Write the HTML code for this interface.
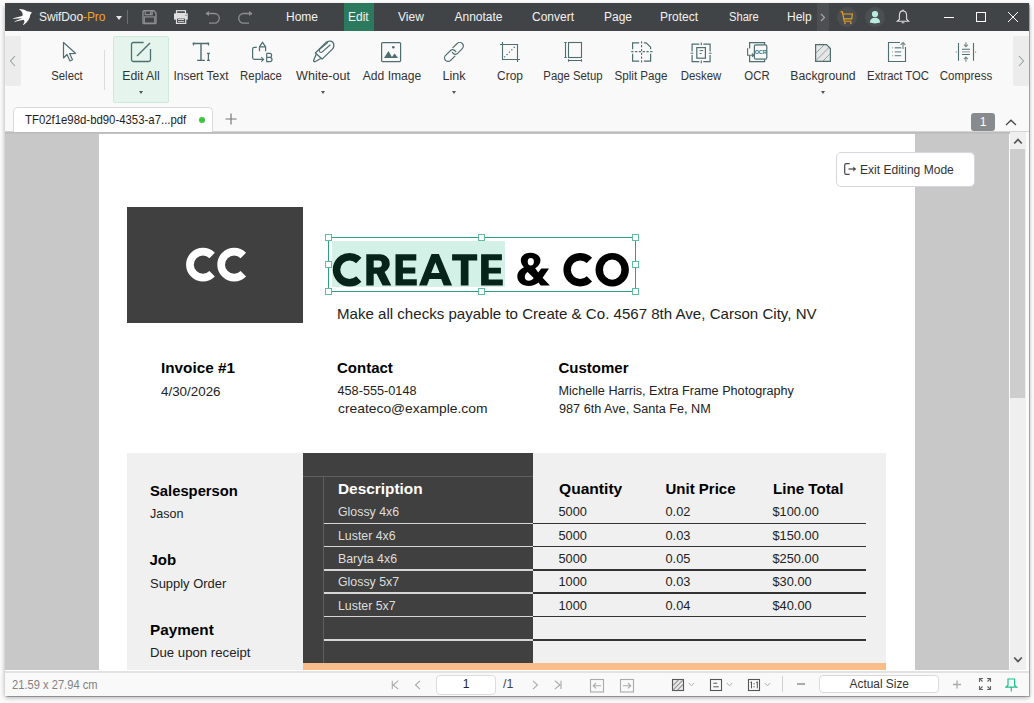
<!DOCTYPE html>
<html><head><meta charset="utf-8">
<style>
*{margin:0;padding:0;box-sizing:border-box}
html,body{width:1034px;height:703px;overflow:hidden;background:#fcfcfc;font-family:"Liberation Sans",sans-serif;position:relative}
.a{position:absolute}
.menu{position:absolute;top:3px;height:28px;line-height:28px;color:#f2f2f2;font-size:12px;white-space:nowrap}
.lbl{position:absolute;top:69px;height:14px;line-height:14px;font-size:12.5px;color:#333;white-space:nowrap;transform:translateX(-50%) scaleX(.92)}
.dd{position:absolute;top:91px;width:0;height:0;border-left:2.5px solid transparent;border-right:2.5px solid transparent;border-top:3px solid #555}
</style></head>
<body>
<div class="a" style="left:5px;top:3px;width:1024px;height:693px;background:#f9f9f9;box-shadow:0 0 1px 0.5px rgba(0,0,0,.25),0 1.5px 5px rgba(0,0,0,.35)"></div>
<!--TITLE-->
<div class="a" style="left:5px;top:3px;width:1024px;height:28px;background:#414446"></div>
<svg class="a" style="left:12px;top:8px" width="22" height="19" viewBox="0 0 22 19">
  <path d="M6.8 1.1C9.5 0.9 12.5 1.8 15 3.3L17.4 3.5L19.9 4.5L18.3 6.8C18 10.5 15.5 14.5 11.5 17L11 16.5C12.8 14.5 13 12.8 11.5 11.8L2.7 13.8L2.5 13.3L10.5 10.2L1.1 10.8L1 10.2L10.3 8C11.2 6.5 10.5 3.5 6.8 1.1Z" fill="#fff"/>
</svg>
<div class="menu" style="left:39px;font-size:12px;letter-spacing:-0.1px">SwifDoo<span style="color:#f0a22a">-Pro</span></div>
<div class="a" style="left:116px;top:16px;width:0;height:0;border-left:3.5px solid transparent;border-right:3.5px solid transparent;border-top:4px solid #e8e8e8"></div>
<div class="a" style="left:127px;top:10px;width:1px;height:14px;background:#6a6d6f"></div>
<svg class="a" style="left:142px;top:10px" width="15" height="15" viewBox="0 0 15 15"><path d="M1.8 0.8H11.8L14 3V12.8Q14 13.6 13.2 13.6H1.8Q1 13.6 1 12.8V1.6Q1 0.8 1.8 0.8Z" fill="none" stroke="#8c8e90" stroke-width="1.4"/><path d="M3.2 0.8V4.6H10.2V0.8" fill="none" stroke="#8c8e90" stroke-width="1.2"/><rect x="8" y="1.4" width="1.5" height="2.6" fill="#8c8e90"/><rect x="2.3" y="6.9" width="10.4" height="6.2" fill="none" stroke="#8c8e90" stroke-width="1.2"/></svg>
<svg class="a" style="left:173px;top:10px" width="16" height="15" viewBox="0 0 16 15"><rect x="3.5" y="0.7" width="9" height="2.8" fill="none" stroke="#e0e0e0" stroke-width="1.2"/><path d="M1 3.4H14.8V9.6H1Z" fill="#e0e0e0"/><rect x="3.5" y="8" width="9.2" height="5.4" fill="#414446" stroke="#e0e0e0" stroke-width="1.2"/><path d="M5 9.5H11.2 M5 11.4H11.2" stroke="#d0d0d0" stroke-width="1"/><circle cx="13" cy="5.3" r="0.6" fill="#555"/></svg>
<svg class="a" style="left:205px;top:11px" width="16" height="14" viewBox="0 0 16 14"><path d="M1 2.5h8.5a4.8 4.8 0 0 1 0 9.6H4" fill="none" stroke="#8c8e90" stroke-width="1.3"/><path d="M0.5 2.5L4 0v5z" fill="#8c8e90"/></svg>
<svg class="a" style="left:237px;top:11px" width="16" height="14" viewBox="0 0 16 14"><path d="M15 2.5H6.5a4.8 4.8 0 0 0 0 9.6H12" fill="none" stroke="#8c8e90" stroke-width="1.3"/><path d="M15.5 2.5L12 0v5z" fill="#8c8e90"/></svg>
<div class="a" style="left:344px;top:3px;width:30px;height:28px;background:#2b7a5e"></div>
<div class="menu" style="left:286px">Home</div>
<div class="menu" style="left:348px">Edit</div>
<div class="menu" style="left:398px">View</div>
<div class="menu" style="left:454.5px">Annotate</div>
<div class="menu" style="left:532px">Convert</div>
<div class="menu" style="left:604px">Page</div>
<div class="menu" style="left:660px">Protect</div>
<div class="menu" style="left:728.5px;transform-origin:0 0;transform:scaleX(.93)">Share</div>
<div class="menu" style="left:787px">Help</div>
<div class="a" style="left:817px;top:3px;width:12px;height:28px;background:#4d5052"></div>
<svg class="a" style="left:820px;top:13px" width="6" height="9" viewBox="0 0 6 9"><path d="M1 1l3.5 3.5L1 8" fill="none" stroke="#aaa" stroke-width="1.1"/></svg>
<div class="a" style="left:837px;top:7px;width:20px;height:20px;border-radius:50%;background:#4c4f51"></div>
<svg class="a" style="left:840px;top:10.8px" width="14" height="14" viewBox="0 0 14 14"><path d="M0.6 0.9H2.4L4.2 10.2H11.4 M3.1 3H12.4L11.7 7.8H3.9" fill="none" stroke="#e8a020" stroke-width="1.15"/><rect x="4.2" y="11.3" width="1.6" height="1.5" fill="#e8a020"/><rect x="10" y="11.3" width="1.6" height="1.5" fill="#e8a020"/></svg>
<div class="a" style="left:865px;top:7px;width:20px;height:20px;border-radius:50%;background:#4c4f51"></div>
<svg class="a" style="left:869px;top:10px" width="12" height="14" viewBox="0 0 12 14"><circle cx="6" cy="4" r="3.1" fill="#b9ecdc"/><path d="M0.8 12.6C1 9.6 3 7.7 6 7.7S11 9.6 11.2 12.6Q6 14.2 0.8 12.6z" fill="#b9ecdc"/></svg>
<svg class="a" style="left:896px;top:9px" width="14" height="15" viewBox="0 0 14 15"><path d="M7 1.9C4.7 1.9 3.4 3.8 3.4 6.5V10.2L1.3 12.3H12.7L10.6 10.2V6.5C10.6 3.8 9.3 1.9 7 1.9Z" fill="none" stroke="#ddd" stroke-width="1.1"/><path d="M7 0.5V1.9 M5.6 13.8H8.4" stroke="#ddd" stroke-width="1.1"/></svg>
<div class="a" style="left:944px;top:17px;width:10px;height:1px;background:#fff"></div>
<div class="a" style="left:976px;top:12px;width:10px;height:10px;border:1px solid #fff"></div>
<svg class="a" style="left:1007px;top:11px" width="12" height="12" viewBox="0 0 12 12"><path d="M1 1L11 11M11 1L1 11" stroke="#fff" stroke-width="1"/></svg>
<!--/TITLE-->
<!--TOOLBAR-->
<div class="a" style="left:5px;top:36px;width:16px;height:50px;background:#ececec;border-radius:2px"></div>
<svg class="a" style="left:9px;top:55px" width="8" height="12" viewBox="0 0 8 12"><path d="M6 1L1.5 6L6 11" fill="none" stroke="#8fa5a5" stroke-width="1.1"/></svg>
<div class="a" style="left:1013px;top:36px;width:16px;height:50px;background:#ececec;border-radius:2px"></div>
<svg class="a" style="left:1017px;top:55px" width="8" height="12" viewBox="0 0 8 12"><path d="M2 1L6.5 6L2 11" fill="none" stroke="#8fa5a5" stroke-width="1.1"/></svg>
<div class="a" style="left:104px;top:50px;width:1px;height:40px;background:#dcdcdc"></div>
<div class="a" style="left:113px;top:36px;width:56px;height:67px;background:#e5f5ee;border:1px solid #cfe9dc;border-radius:2px"></div>
<!-- select -->
<svg class="a" style="left:62px;top:41px" width="16" height="22" viewBox="0 0 16 22"><path d="M1.5 1.5L1.5 17L5 13.5L8 20L10.5 18.8L7.6 12.6L13.5 12.3Z" fill="none" stroke="#4e6e70" stroke-width="1.2" stroke-linejoin="round"/></svg>
<!-- edit all -->
<svg class="a" style="left:130px;top:41px" width="22" height="22" viewBox="0 0 22 22"><path d="M13.6 1.5H3.3Q1.5 1.5 1.5 3.3V18.7Q1.5 20.5 3.3 20.5H18.7Q20.5 20.5 20.5 18.7V8" fill="none" stroke="#4e6e70" stroke-width="1.3"/><path d="M7 15L20 2" stroke="#4e6e70" stroke-width="1.4"/></svg>
<!-- insert text -->
<svg class="a" style="left:192px;top:42px" width="20" height="20" viewBox="0 0 20 20"><path d="M0.8 1.5H17.1 M9 1.5V18.4 M5.1 18.4H12.9" fill="none" stroke="#4e6e70" stroke-width="1.4"/><path d="M0.6 0.8H3.2L1.1 4.3Z M17.3 0.8H14.7L16.8 4.3Z" fill="#4e6e70"/><path d="M16.4 11.3V18.4 M15 11.3H17.9 M15 18.4H17.9" fill="none" stroke="#4e6e70" stroke-width="1.2"/></svg>
<!-- replace -->
<svg class="a" style="left:251px;top:41px" width="23" height="22" viewBox="0 0 23 22"><path d="M5.8 6.4H3.4Q1.6 6.4 1.6 8.2V16.6Q1.6 18.4 3.4 18.4H12.4" fill="none" stroke="#4e6e70" stroke-width="1.2"/><path d="M10.3 16.1L12.6 18.4L10.3 20.7" fill="none" stroke="#4e6e70" stroke-width="1.1"/><path d="M8.5 10.2V5.9H14.6V10.2 M8.3 6.1L11.5 1.3L14.8 6.1" fill="none" stroke="#4e6e70" stroke-width="1.2"/><path d="M15.7 12.3H18.8Q20.6 12.3 20.6 14.3Q20.6 16.4 18.8 16.4H15.7 M18.8 16.4Q21 16.4 21 18.5Q21 20.6 18.8 20.6H15.7V12.3" fill="none" stroke="#4e6e70" stroke-width="1.2"/></svg>
<!-- white-out -->
<svg class="a" style="left:312px;top:40px" width="23" height="23" viewBox="0 -1 23 23"><path d="M3.4 12L13.8 1.6C16 -0.2 19.3 -0.3 20.8 1.3C22.4 3 22.2 6.3 20.4 8.1L10.1 18.1Z" fill="none" stroke="#4e6e70" stroke-width="1.3" stroke-linejoin="round"/><path d="M16 1.2L7.6 8.2Q6.5 9.7 7.8 10.9Q9 11.9 10.2 10.9L18.4 3.7" fill="none" stroke="#4e6e70" stroke-width="1.2"/><path d="M4.2 13.2L1.6 19.6Q1.7 20.9 3 20.7L8.8 17.5" fill="none" stroke="#4e6e70" stroke-width="1.3" stroke-linejoin="round"/></svg>
<!-- add image -->
<svg class="a" style="left:380px;top:41px" width="22" height="22" viewBox="0 0 22 22"><rect x="1.6" y="1.6" width="19" height="19" rx="1" fill="none" stroke="#4e6e70" stroke-width="1.2"/><circle cx="13.3" cy="6.3" r="1.3" fill="#4e6e70"/><path d="M4 17L8.5 10L12.5 17Z M11 17L14.7 12.5L18 17Z" fill="#4e6e70"/></svg>
<!-- link -->
<svg class="a" style="left:444px;top:42px" width="20" height="20" viewBox="0 0 20 20"><path d="M8.9 5.6L13.2 1.5A3.6 3.6 0 0 1 18.3 6.6L13.1 11.8Q10.6 13.4 8.3 10.4" fill="none" stroke="#4e6e70" stroke-width="1.2" stroke-linecap="round"/><path d="M10.9 14.2L6.7 18.4A3.6 3.6 0 0 1 1.6 13.3L6.8 8.2Q9.4 6.6 11.8 9.6" fill="none" stroke="#4e6e70" stroke-width="1.2" stroke-linecap="round"/></svg>
<!-- crop -->
<svg class="a" style="left:499px;top:41px" width="22" height="22" viewBox="0 0 22 22"><path d="M3.5 1V18.5H21 M1 3.5H18.5V21" fill="none" stroke="#4e6e70" stroke-width="1.1"/><path d="M5.6 15.9L15.9 5.6" fill="none" stroke="#4e6e70" stroke-width="1.3" stroke-linecap="round" stroke-dasharray="0.1 3.3"/></svg>
<!-- page setup -->
<svg class="a" style="left:564px;top:41px" width="20" height="22" viewBox="0 0 20 22"><rect x="4.5" y="1.5" width="13" height="15" fill="none" stroke="#4e6e70" stroke-width="1.1"/><path d="M1.5 1V16.5 M0.3 1.5H2.7 M0.3 16.5H2.7 M4.5 19.5H17.5 M4.5 18.3V20.7 M17.5 18.3V20.7" fill="none" stroke="#4e6e70" stroke-width="1.1"/></svg>
<!-- split page -->
<svg class="a" style="left:631px;top:41px" width="22" height="22" viewBox="0 0 22 22"><path d="M1.6 8.2V1.8H8.2 M12.8 1.8H15.2L19.6 6.2V8.2 M19.6 12.8V20.2H12.8 M8.2 20.2H1.6V12.8" fill="none" stroke="#4e6e70" stroke-width="1.2"/><path d="M10.6 0.3V21.7 M0.3 10.6H21.7" fill="none" stroke="#4e6e70" stroke-width="1.1" stroke-dasharray="2.2 1.6"/></svg>
<!-- deskew -->
<svg class="a" style="left:690px;top:42px" width="22" height="22" viewBox="0 0 22 22"><path d="M2.1 9.5V2.1H9.3 M13.3 2.1H20.1V9.5 M20.1 13.1V19.7H13.3 M9.3 19.7H2.1V13.1" fill="none" stroke="#4e6e70" stroke-width="1.2"/><path d="M11.3 0.6V3.3 M11.3 18.5V21.2 M0.6 11.3H3.3 M18.9 11.3H21.6" stroke="#4e6e70" stroke-width="1.1"/><rect x="6.8" y="5.6" width="8.6" height="10.6" fill="none" stroke="#4e6e70" stroke-width="1.2"/><path d="M9.6 8.6H13.2 M9.6 11.5H11.6" stroke="#4e6e70" stroke-width="1"/></svg>
<!-- ocr -->
<svg class="a" style="left:746px;top:41px" width="22" height="22" viewBox="0 0 22 22"><path d="M3.6 7.5V1.6H18.6V3.7 M3.6 14.5V20.6H18.6V18.2" fill="none" stroke="#4e6e70" stroke-width="1.2"/><rect x="8.4" y="3.8" width="12.4" height="14.4" rx="1.5" fill="#f7f7f7" stroke="#4e6e70" stroke-width="1.2"/><path d="M10 4.3H17 M11 17.6H18" stroke="#9aabab" stroke-width="1.2"/><text x="14.6" y="12.6" font-family="Liberation Sans" font-weight="bold" font-size="5.6" fill="#4e6e70" text-anchor="middle" letter-spacing="-0.2">OCR</text><path d="M1.6 7.3V14.2H7.6 M6 12.5L7.8 14.2L6 15.9" fill="none" stroke="#4e6e70" stroke-width="1.1"/></svg>
<!-- background -->
<svg class="a" style="left:814px;top:43px" width="18" height="20" viewBox="0 0 18 20"><path d="M1.6 1.6H12.5L16.4 5.5V18.4H1.6Z" fill="#e6e6e6" stroke="#4e6e70" stroke-width="1.2"/><path d="M2 10L10 2 M2 17.5L16 3.5 M9 18L16 11" stroke="#5a7879" stroke-width="0.9" stroke-dasharray="1 0.4"/></svg>
<!-- extract toc -->
<svg class="a" style="left:887px;top:41px" width="20" height="22" viewBox="0 0 20 22"><path d="M13 1.5H1.5V20.5H18.5V6" fill="none" stroke="#4e6e70" stroke-width="1.1"/><path d="M16 8V1.5 M13.6 3.9L16 1.5L18.4 3.9" fill="none" stroke="#6f8a8b" stroke-width="1.2"/><path d="M7.7 6.8H14.2 M7.7 10.9H14.2 M7.7 14.6H14.2" stroke="#7a9393" stroke-width="1.4"/><path d="M5.5 6.2V7.4 M5.5 10.3V11.5 M5.5 14V15.2" stroke="#8aa0a0" stroke-width="0.8"/></svg>
<!-- compress -->
<svg class="a" style="left:955px;top:41px" width="22" height="22" viewBox="0 0 22 22"><path d="M3.5 2.1V19.7 M18.5 2.1V19.7" stroke="#4e6e70" stroke-width="1.1"/><path d="M1.3 10.5V11.7 M20.6 10.5V11.7" stroke="#4e6e70" stroke-width="0.8"/><path d="M7 8.3H14.9 M7 13.5H14.9" stroke="#4e6e70" stroke-width="1.1"/><path d="M7 10.9H14.9" stroke="#8aa0a0" stroke-width="1.1"/><path d="M10.9 1.2V5.5 M8.9 3.6L10.9 5.8L12.9 3.6 M10.9 20.8V16.3 M8.9 18.2L10.9 16L12.9 18.2" fill="none" stroke="#6f8a8b" stroke-width="1.1"/></svg>
<div class="lbl" style="left:67.2px;transform:translateX(-50%) scaleX(0.905)">Select</div>
<div class="lbl" style="left:140.6px;transform:translateX(-50%) scaleX(0.980)">Edit All</div>
<div class="lbl" style="left:201.2px;transform:translateX(-50%) scaleX(0.961)">Insert Text</div>
<div class="lbl" style="left:261.2px;transform:translateX(-50%) scaleX(0.911)">Replace</div>
<div class="lbl" style="left:322.7px;transform:translateX(-50%) scaleX(1.006)">White-out</div>
<div class="lbl" style="left:391.6px;transform:translateX(-50%) scaleX(0.967)">Add Image</div>
<div class="lbl" style="left:453.9px;transform:translateX(-50%) scaleX(1.007)">Link</div>
<div class="lbl" style="left:509.9px;transform:translateX(-50%) scaleX(0.954)">Crop</div>
<div class="lbl" style="left:572.6px;transform:translateX(-50%) scaleX(0.907)">Page Setup</div>
<div class="lbl" style="left:640.6px;transform:translateX(-50%) scaleX(0.931)">Split Page</div>
<div class="lbl" style="left:701.1px;transform:translateX(-50%) scaleX(0.911)">Deskew</div>
<div class="lbl" style="left:757.1px;transform:translateX(-50%) scaleX(0.909)">OCR</div>
<div class="lbl" style="left:823.1px;transform:translateX(-50%) scaleX(0.978)">Background</div>
<div class="lbl" style="left:897.6px;transform:translateX(-50%) scaleX(0.905)">Extract TOC</div>
<div class="lbl" style="left:966.1px;transform:translateX(-50%) scaleX(0.920)">Compress</div>
<div class="dd" style="left:138.5px"></div>
<div class="dd" style="left:320.5px"></div>
<div class="dd" style="left:451.5px"></div>
<div class="dd" style="left:820.5px"></div>

<!--/TOOLBAR-->
<!--TABS-->
<div class="a" style="left:5px;top:131px;width:1024px;height:1px;background:#d4d4d4"></div>
<div class="a" style="left:13px;top:107px;width:200px;height:25px;background:#fff;border:1px solid #d9d9d9;border-bottom:none;border-radius:5px 5px 0 0"></div>
<div class="a" style="left:25px;top:112px;height:16px;line-height:16px;font-size:13px;color:#1e1e1e;white-space:nowrap;transform-origin:0 50%;transform:scaleX(.875)">TF02f1e98d-bd90-4353-a7...pdf</div>
<div class="a" style="left:199px;top:117px;width:6px;height:6px;border-radius:50%;background:#3cc43c"></div>
<svg class="a" style="left:225px;top:113px" width="12" height="12" viewBox="0 0 12 12"><path d="M6 0.5V11.5M0.5 6H11.5" stroke="#777" stroke-width="1.2"/></svg>
<div class="a" style="left:971px;top:113px;width:24px;height:18px;background:#888b8d;border-radius:3px;color:#fff;font-size:12px;line-height:18px;text-align:center">1</div>
<svg class="a" style="left:1005px;top:119px" width="12" height="7" viewBox="0 0 12 7"><path d="M1 6L6 1.2L11 6" fill="none" stroke="#444" stroke-width="1.2"/></svg>

<!--/TABS-->
<!--CONTENT-->
<div class="a" style="left:5px;top:132px;width:1024px;height:538px;background:#fbfbfb"></div>
<div class="a" style="left:5px;top:132px;width:1004px;height:538px;background:#c8c8c8"></div>
<div class="a" style="left:5px;top:132px;width:1005px;height:2px;background:linear-gradient(#b9b9b9,#c4c4c4)"></div>
<div class="a" style="left:99px;top:134px;width:816px;height:536px;background:#fff;overflow:hidden">
</div>
<!-- scrollbar -->
<div class="a" style="left:1010px;top:132px;width:16px;height:538px;background:#efefef"></div>
<div class="a" style="left:1010px;top:149px;width:15px;height:249px;background:#cdcdcd"></div>
<svg class="a" style="left:1013px;top:137px" width="10" height="8" viewBox="0 0 10 8"><path d="M1.2 6.5L5 2.5L8.8 6.5" fill="none" stroke="#555" stroke-width="1.8"/></svg>
<svg class="a" style="left:1013px;top:656px" width="10" height="8" viewBox="0 0 10 8"><path d="M1.2 1.5L5 5.5L8.8 1.5" fill="none" stroke="#555" stroke-width="1.8"/></svg>

<!--/CONTENT-->
<!--DOC-->
<div class="a" style="left:127px;top:207px;width:176px;height:116px;background:#404040"></div>
<div class="a" style="left:332px;top:241px;width:173px;height:46px;background:#d3f1e7"></div>
<svg class="a" style="left:0;top:0" width="1034" height="703" viewBox="0 0 1034 703"><path d="M212.14 255.46A13.0 13.0 0 1 0 212.14 273.84" fill="none" stroke="#fff" stroke-width="7.7"/><path d="M243.34 255.46A13.0 13.0 0 1 0 243.34 273.84" fill="none" stroke="#fff" stroke-width="7.7"/><path d="M358.78 260.52A13.05 13.05 0 1 0 358.78 278.98" fill="none" stroke="#062419" stroke-width="7.5"/><path d="M366.3 254.3H380.4A9.35 9.35 0 0 1 384.6 272L391.3 285.4H382.6L376.6 273.7H373.7V285.4H366.3Z M373.7 260.6H378.5A3.4 3.4 0 0 1 378.5 267.4H373.7Z" fill="#062419" fill-rule="evenodd"/><path d="M395.5 254.3H416.3V260.4H402.9V267.6H415.3V273.4H402.9V279.3H416.8V285.4H395.5Z" fill="#062419"/><path d="M419 285.5L431.5 254.1H438.9L452.1 285.5H443.7L441.2 279H429.4L427 285.5Z M431.2 273L435.4 262.4L439.6 273Z" fill="#062419" fill-rule="evenodd"/><path d="M452.1 254.2H477.2V260.4H468.5V285.5H460.8V260.4H452.1Z" fill="#062419"/><path d="M481.1 254.2H501.9V260.3H488.7V267.8H500.9V273.6H488.7V279.4H502.8V285.5H481.1Z" fill="#062419"/><path d="M530.6 252.8C536.5 252.8 540.5 256.3 540.5 260.2C540.5 263.8 538.3 266.2 535.2 268.2L538.2 272.6L541.3 268.5H549L542.6 277.7L549.9 285.6H540.7L538.5 282.6C535.8 285 532.5 286 529 286C522 286 517.3 281.8 517.3 276.5C517.3 271.8 520.5 269.2 524 267.3C521.8 265 520.8 262.8 520.8 260.3C520.8 255.8 525 252.8 530.6 252.8Z M527.7 261.7A3.1 3.7 0 1 0 533.9 261.7A3.1 3.7 0 1 0 527.7 261.7Z M527.6 271.9L533.7 278C532.4 279.8 530.8 280.8 528.8 280.8C526.5 280.8 524.8 279.4 524.8 277.2C524.8 275 525.8 273.3 527.6 271.9Z" fill="#000" fill-rule="evenodd"/><path d="M589.43 260.47A13.05 13.05 0 1 0 589.43 278.93" fill="none" stroke="#000" stroke-width="7.5"/><path d="M628.9 269.7A16.7 16.8 0 1 0 595.5 269.7A16.7 16.8 0 1 0 628.9 269.7Z M621.4 269.7A9.2 10.1 0 1 0 603 269.7A9.2 10.1 0 1 0 621.4 269.7Z" fill="#000" fill-rule="evenodd"/></svg>
<div class="a" style="left:328px;top:237px;width:308px;height:55px;border:1px solid #2ba27a"></div>
<div class="a" style="left:325.0px;top:234.0px;width:7px;height:7px;background:#fff;border:1px solid #5fbf9c"></div>
<div class="a" style="left:325.0px;top:261.0px;width:7px;height:7px;background:#fff;border:1px solid #5fbf9c"></div>
<div class="a" style="left:325.0px;top:288.0px;width:7px;height:7px;background:#fff;border:1px solid #5fbf9c"></div>
<div class="a" style="left:478.0px;top:234.0px;width:7px;height:7px;background:#fff;border:1px solid #5fbf9c"></div>
<div class="a" style="left:478.0px;top:288.0px;width:7px;height:7px;background:#fff;border:1px solid #5fbf9c"></div>
<div class="a" style="left:632.0px;top:234.0px;width:7px;height:7px;background:#fff;border:1px solid #5fbf9c"></div>
<div class="a" style="left:632.0px;top:261.0px;width:7px;height:7px;background:#fff;border:1px solid #5fbf9c"></div>
<div class="a" style="left:632.0px;top:288.0px;width:7px;height:7px;background:#fff;border:1px solid #5fbf9c"></div>
<div class="a" style="left:337.2px;top:305.90px;font-size:15px;line-height:15px;white-space:nowrap;color:#222;transform-origin:0 0;transform:scaleX(1.005);">Make all checks payable to Create &amp; Co. 4567 8th Ave, Carson City, NV</div>
<div class="a" style="left:161.0px;top:359.50px;font-size:15px;line-height:15px;white-space:nowrap;color:#000;font-weight:bold;transform-origin:0 0;transform:scaleX(1.02);">Invoice #1</div>
<div class="a" style="left:160.5px;top:385.20px;font-size:13px;line-height:13px;white-space:nowrap;color:#222;transform-origin:0 0;transform:scaleX(1.03);">4/30/2026</div>
<div class="a" style="left:337.0px;top:359.50px;font-size:15px;line-height:15px;white-space:nowrap;color:#000;font-weight:bold;">Contact</div>
<div class="a" style="left:337.5px;top:385.05px;font-size:12.7px;line-height:12.7px;white-space:nowrap;color:#222;">458-555-0148</div>
<div class="a" style="left:337.5px;top:402.37px;font-size:13.5px;line-height:13.5px;white-space:nowrap;color:#222;transform-origin:0 0;transform:scaleX(1.025);">createco@example.com</div>
<div class="a" style="left:558.5px;top:359.50px;font-size:15px;line-height:15px;white-space:nowrap;color:#000;font-weight:bold;">Customer</div>
<div class="a" style="left:558.5px;top:385.29px;font-size:12.65px;line-height:12.65px;white-space:nowrap;color:#222;">Michelle Harris, Extra Frame Photography</div>
<div class="a" style="left:558.5px;top:402.72px;font-size:12.5px;line-height:12.5px;white-space:nowrap;color:#222;transform-origin:0 0;transform:scaleX(1.013);">987 6th Ave, Santa Fe, NM</div>
<div class="a" style="left:127px;top:453px;width:759px;height:217px;background:#f0f0f0"></div>
<div class="a" style="left:303px;top:453px;width:230px;height:210px;background:#404040"></div>
<div class="a" style="left:303px;top:663px;width:583px;height:7px;background:#f9bd8a"></div>
<div class="a" style="left:303px;top:476px;width:230px;height:1px;background:#5e5e5e"></div>
<div class="a" style="left:323px;top:476px;width:1px;height:187px;background:#5e5e5e"></div>
<div class="a" style="left:323.5px;top:522.50px;width:209.5px;height:1.7px;background:#d6d6d6"></div>
<div class="a" style="left:533px;top:522.50px;width:333px;height:1.7px;background:#333"></div>
<div class="a" style="left:323.5px;top:545.50px;width:209.5px;height:1.7px;background:#d6d6d6"></div>
<div class="a" style="left:533px;top:545.50px;width:333px;height:1.7px;background:#333"></div>
<div class="a" style="left:323.5px;top:568.90px;width:209.5px;height:1.7px;background:#d6d6d6"></div>
<div class="a" style="left:533px;top:568.90px;width:333px;height:1.7px;background:#333"></div>
<div class="a" style="left:323.5px;top:592.20px;width:209.5px;height:1.7px;background:#d6d6d6"></div>
<div class="a" style="left:533px;top:592.20px;width:333px;height:1.7px;background:#333"></div>
<div class="a" style="left:323.5px;top:615.80px;width:209.5px;height:1.7px;background:#d6d6d6"></div>
<div class="a" style="left:533px;top:615.80px;width:333px;height:1.7px;background:#333"></div>
<div class="a" style="left:323.5px;top:638.90px;width:209.5px;height:1.7px;background:#d6d6d6"></div>
<div class="a" style="left:533px;top:638.90px;width:333px;height:1.7px;background:#333"></div>
<div class="a" style="left:149.5px;top:482.70px;font-size:15px;line-height:15px;white-space:nowrap;color:#000;font-weight:bold;transform-origin:0 0;transform:scaleX(0.985);">Salesperson</div>
<div class="a" style="left:149.5px;top:507.66px;font-size:12.8px;line-height:12.8px;white-space:nowrap;color:#222;transform-origin:0 0;transform:scaleX(0.98);">Jason</div>
<div class="a" style="left:149.5px;top:552.30px;font-size:15px;line-height:15px;white-space:nowrap;color:#000;font-weight:bold;">Job</div>
<div class="a" style="left:149.5px;top:577.96px;font-size:12.8px;line-height:12.8px;white-space:nowrap;color:#222;transform-origin:0 0;transform:scaleX(1.012);">Supply Order</div>
<div class="a" style="left:149.5px;top:622.00px;font-size:15px;line-height:15px;white-space:nowrap;color:#000;font-weight:bold;transform-origin:0 0;transform:scaleX(1.02);">Payment</div>
<div class="a" style="left:149.5px;top:647.36px;font-size:12.8px;line-height:12.8px;white-space:nowrap;color:#222;transform-origin:0 0;transform:scaleX(1.03);">Due upon receipt</div>
<div class="a" style="left:337.5px;top:481.20px;font-size:15px;line-height:15px;white-space:nowrap;color:#fff;font-weight:bold;transform-origin:0 0;transform:scaleX(1.025);">Description</div>
<div class="a" style="left:558.5px;top:480.70px;font-size:15px;line-height:15px;white-space:nowrap;color:#000;font-weight:bold;transform-origin:0 0;transform:scaleX(1.04);">Quantity</div>
<div class="a" style="left:665.5px;top:480.70px;font-size:15px;line-height:15px;white-space:nowrap;color:#000;font-weight:bold;">Unit Price</div>
<div class="a" style="left:772.5px;top:480.70px;font-size:15px;line-height:15px;white-space:nowrap;color:#000;font-weight:bold;transform-origin:0 0;transform:scaleX(1.01);">Line Total</div>
<div class="a" style="left:337.5px;top:506.16px;font-size:12.8px;line-height:12.8px;white-space:nowrap;color:#dedede;transform-origin:0 0;transform:scaleX(0.965);">Glossy 4x6</div>
<div class="a" style="left:558.5px;top:506.16px;font-size:12.8px;line-height:12.8px;white-space:nowrap;color:#222;">5000</div>
<div class="a" style="left:665.5px;top:506.16px;font-size:12.8px;line-height:12.8px;white-space:nowrap;color:#222;">0.02</div>
<div class="a" style="left:772.5px;top:506.16px;font-size:12.8px;line-height:12.8px;white-space:nowrap;color:#222;">$100.00</div>
<div class="a" style="left:337.5px;top:529.51px;font-size:12.8px;line-height:12.8px;white-space:nowrap;color:#dedede;transform-origin:0 0;transform:scaleX(0.965);">Luster 4x6</div>
<div class="a" style="left:558.5px;top:529.51px;font-size:12.8px;line-height:12.8px;white-space:nowrap;color:#222;">5000</div>
<div class="a" style="left:665.5px;top:529.51px;font-size:12.8px;line-height:12.8px;white-space:nowrap;color:#222;">0.03</div>
<div class="a" style="left:772.5px;top:529.51px;font-size:12.8px;line-height:12.8px;white-space:nowrap;color:#222;">$150.00</div>
<div class="a" style="left:337.5px;top:552.86px;font-size:12.8px;line-height:12.8px;white-space:nowrap;color:#dedede;transform-origin:0 0;transform:scaleX(0.965);">Baryta 4x6</div>
<div class="a" style="left:558.5px;top:552.86px;font-size:12.8px;line-height:12.8px;white-space:nowrap;color:#222;">5000</div>
<div class="a" style="left:665.5px;top:552.86px;font-size:12.8px;line-height:12.8px;white-space:nowrap;color:#222;">0.05</div>
<div class="a" style="left:772.5px;top:552.86px;font-size:12.8px;line-height:12.8px;white-space:nowrap;color:#222;">$250.00</div>
<div class="a" style="left:337.5px;top:576.21px;font-size:12.8px;line-height:12.8px;white-space:nowrap;color:#dedede;transform-origin:0 0;transform:scaleX(0.965);">Glossy 5x7</div>
<div class="a" style="left:558.5px;top:576.21px;font-size:12.8px;line-height:12.8px;white-space:nowrap;color:#222;">1000</div>
<div class="a" style="left:665.5px;top:576.21px;font-size:12.8px;line-height:12.8px;white-space:nowrap;color:#222;">0.03</div>
<div class="a" style="left:772.5px;top:576.21px;font-size:12.8px;line-height:12.8px;white-space:nowrap;color:#222;">$30.00</div>
<div class="a" style="left:337.5px;top:599.56px;font-size:12.8px;line-height:12.8px;white-space:nowrap;color:#dedede;transform-origin:0 0;transform:scaleX(0.965);">Luster 5x7</div>
<div class="a" style="left:558.5px;top:599.56px;font-size:12.8px;line-height:12.8px;white-space:nowrap;color:#222;">1000</div>
<div class="a" style="left:665.5px;top:599.56px;font-size:12.8px;line-height:12.8px;white-space:nowrap;color:#222;">0.04</div>
<div class="a" style="left:772.5px;top:599.56px;font-size:12.8px;line-height:12.8px;white-space:nowrap;color:#222;">$40.00</div>
<div class="a" style="left:836px;top:152px;width:138.5px;height:34.5px;background:#fff;border:1px solid #d5d7dd;border-radius:5px"></div>
<svg class="a" style="left:843px;top:162px" width="15" height="14" viewBox="0 0 15 14"><path d="M6.6 1.6H3.3Q1.7 1.6 1.7 3.2V10.8Q1.7 12.4 3.3 12.4H6.6" fill="none" stroke="#444" stroke-width="1.2"/><path d="M5.5 7H10.8" stroke="#444" stroke-width="1.2"/><path d="M10.3 4.6L13.2 7L10.3 9.4Z" fill="#444"/></svg>
<div class="a" style="left:860.0px;top:163.76px;font-size:12.8px;line-height:12.8px;white-space:nowrap;color:#333;transform-origin:0 0;transform:scaleX(0.942);">Exit Editing Mode</div>
<!--/DOC-->
<!--STATUS-->
<div class="a" style="left:5px;top:670px;width:1024px;height:1px;background:#fff"></div>
<div class="a" style="left:5px;top:671px;width:1024px;height:2px;background:#e2e2e2"></div>
<div class="a" style="left:5px;top:673px;width:1024px;height:23px;background:#f9f9f9"></div>
<div class="a" style="left:12px;top:677.7px;height:15px;line-height:15px;font-size:12px;color:#828282;white-space:nowrap;transform-origin:0 50%;transform:scaleX(.93)">21.59 x 27.94 cm</div>
<svg class="a" style="left:390px;top:680px" width="10" height="10" viewBox="0 0 10 10"><path d="M2.3 0.7V9.1 M8.3 0.7L3.2 5L8.3 9.1" fill="none" stroke="#aaa" stroke-width="1.1"/></svg>
<svg class="a" style="left:413px;top:680px" width="10" height="10" viewBox="0 0 10 10"><path d="M7 0.8L2.5 5L7 9.2" fill="none" stroke="#aaa" stroke-width="1.1"/></svg>
<div class="a" style="left:436px;top:675px;width:60px;height:19.5px;background:#fff;border:1px solid #dcdcdc;border-radius:4px;font-size:12px;line-height:17px;text-align:center;color:#222">1</div>
<div class="a" style="left:503px;top:677px;height:15px;line-height:15px;font-size:12.5px;color:#444">/1</div>
<svg class="a" style="left:530px;top:680px" width="10" height="10" viewBox="0 0 10 10"><path d="M3 0.8L7.5 5L3 9.2" fill="none" stroke="#aaa" stroke-width="1.1"/></svg>
<svg class="a" style="left:553px;top:680px" width="10" height="10" viewBox="0 0 10 10"><path d="M8 0.7V9.1 M1.8 0.7L6.9 5L1.8 9.1" fill="none" stroke="#aaa" stroke-width="1.1"/></svg>
<svg class="a" style="left:589px;top:678px" width="16" height="15" viewBox="0 0 16 15"><rect x="1.5" y="1.5" width="13" height="12.5" fill="none" stroke="#aaa" stroke-width="1.1"/><path d="M12 7.7H4.5 M7 5L4.3 7.7L7 10.4" fill="none" stroke="#aaa" stroke-width="1.1"/></svg>
<svg class="a" style="left:619px;top:678px" width="16" height="15" viewBox="0 0 16 15"><rect x="1.5" y="1.5" width="13" height="12.5" fill="none" stroke="#aaa" stroke-width="1.1"/><path d="M4 7.7H11.5 M9 5L11.7 7.7L9 10.4" fill="none" stroke="#aaa" stroke-width="1.1"/></svg>
<svg class="a" style="left:671px;top:678px" width="14" height="14" viewBox="0 0 14 14"><rect x="1.5" y="1.5" width="11" height="11" fill="#ececec" stroke="#555" stroke-width="1.1"/><path d="M2 7.5L7.5 2 M2 12L12 2 M6.5 12L12 6.5" stroke="#9a9a9a" stroke-width="1.1"/></svg>
<svg class="a" style="left:688px;top:682px" width="7" height="5" viewBox="0 0 7 5"><path d="M0.8 1L3.5 3.8L6.2 1" fill="none" stroke="#aaa" stroke-width="1"/></svg>
<svg class="a" style="left:709px;top:678px" width="14" height="14" viewBox="0 0 14 14"><rect x="1.5" y="1.5" width="11" height="11" fill="none" stroke="#555" stroke-width="1.1"/><path d="M4.3 5.2H8.2 M4.3 8.8H9.8" stroke="#555" stroke-width="1"/></svg>
<svg class="a" style="left:726px;top:682px" width="7" height="5" viewBox="0 0 7 5"><path d="M0.8 1L3.5 3.8L6.2 1" fill="none" stroke="#aaa" stroke-width="1"/></svg>
<svg class="a" style="left:747px;top:678px" width="14" height="14" viewBox="0 0 14 14"><rect x="1.5" y="1.5" width="11" height="11" fill="none" stroke="#555" stroke-width="1.1"/><path d="M3.3 4.7L4.5 3.8V10.3 M9.1 4.7L10.3 3.8V10.3" fill="none" stroke="#555" stroke-width="1"/><rect x="6.5" y="5.2" width="1.1" height="1.1" fill="#555"/><rect x="6.5" y="8.2" width="1.1" height="1.1" fill="#555"/></svg>
<svg class="a" style="left:764px;top:682px" width="7" height="5" viewBox="0 0 7 5"><path d="M0.8 1L3.5 3.8L6.2 1" fill="none" stroke="#aaa" stroke-width="1"/></svg>
<div class="a" style="left:782px;top:676px;width:1px;height:16px;background:#d0d0d0"></div>
<div class="a" style="left:797px;top:683px;width:8px;height:1.5px;background:#aaa"></div>
<div class="a" style="left:819px;top:675px;width:120px;height:18px;background:#fff;border:1px solid #dadada;border-radius:4px;font-size:12.5px;line-height:16px;text-align:center;color:#333"><span style="display:inline-block;transform:scaleX(.95)">Actual Size</span></div>
<svg class="a" style="left:952px;top:680px" width="10" height="9" viewBox="0 0 10 9"><path d="M5 0.5V8.5M1 4.5H9" stroke="#aaa" stroke-width="1.3"/></svg>
<svg class="a" style="left:978px;top:677px" width="14" height="14" viewBox="0 0 14 14"><path d="M1.5 5V1.5H5 M1.5 1.5L4.5 4.5 M9 1.5H12.5V5 M12.5 1.5L9.5 4.5 M1.5 9V12.5H5 M1.5 12.5L4.5 9.5 M12.5 9V12.5H9 M12.5 12.5L9.5 9.5" fill="none" stroke="#666" stroke-width="1.1"/></svg>
<svg class="a" style="left:1005px;top:678px" width="13" height="14" viewBox="0 0 13 14"><path d="M3 1H9.6V7.2L11.6 9.1H1L3 7.2Z M6.3 9.1V13.4" fill="none" stroke="#1ec08c" stroke-width="1.2" stroke-linejoin="miter"/></svg>

<!--/STATUS-->
</body></html>
